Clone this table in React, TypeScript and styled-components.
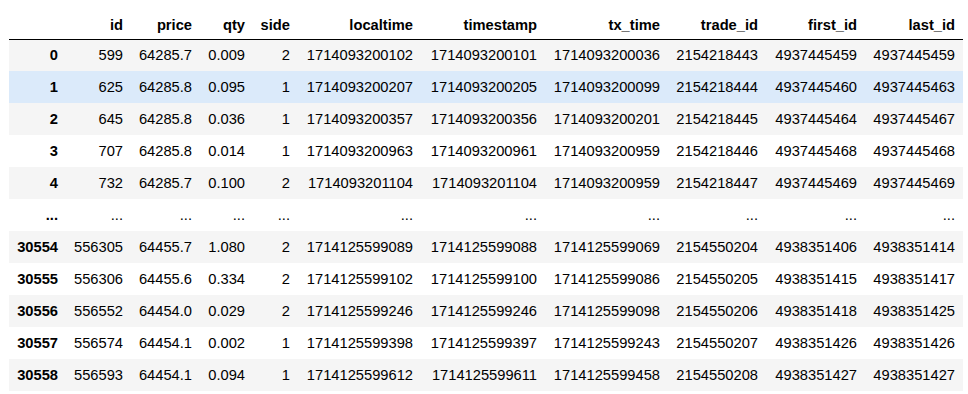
import styled, { createGlobalStyle } from "styled-components";

const GlobalStyle = createGlobalStyle`
  html, body {
    margin: 0;
    padding: 0;
    background: #fff;
  }
`;

const Wrap = styled.div`
  padding: 0 0 0 9px;
  font-family: "Liberation Sans", Arial, sans-serif;
  font-size: 14.7px;
  color: #000;
`;

const Table = styled.table`
  border-collapse: collapse;
  border-spacing: 0;
  table-layout: fixed;
  width: 954px;
`;

const HeadRow = styled.tr`
  height: 39px;
  border-bottom: 1px solid #000;
`;

const HeadCell = styled.th`
  text-align: right;
  vertical-align: bottom;
  font-weight: bold;
  padding: 0 8px 5px 0;
  line-height: 17px;
  white-space: nowrap;
`;

const Row = styled.tr<{ $hover?: boolean }>`
  height: 32px;
  background: ${(p) => (p.$hover ? "#dbeafa" : "transparent")};
  &:nth-child(odd) {
    background: ${(p) => (p.$hover ? "#dbeafa" : "#f5f5f5")};
  }
`;

const IndexCell = styled.th`
  text-align: right;
  font-weight: bold;
  padding: 0 8px 0 0;
  line-height: 17px;
  white-space: nowrap;
`;

const Cell = styled.td`
  text-align: right;
  padding: 0 8px 0 0;
  line-height: 17px;
  white-space: nowrap;
`;

const columns = [
  "id",
  "price",
  "qty",
  "side",
  "localtime",
  "timestamp",
  "tx_time",
  "trade_id",
  "first_id",
  "last_id",
];

const widths = [57, 65, 69, 53, 45, 123, 124, 123, 98, 99, 98];

const rows: string[][] = [
  ["0", "599", "64285.7", "0.009", "2", "1714093200102", "1714093200101", "1714093200036", "2154218443", "4937445459", "4937445459"],
  ["1", "625", "64285.8", "0.095", "1", "1714093200207", "1714093200205", "1714093200099", "2154218444", "4937445460", "4937445463"],
  ["2", "645", "64285.8", "0.036", "1", "1714093200357", "1714093200356", "1714093200201", "2154218445", "4937445464", "4937445467"],
  ["3", "707", "64285.8", "0.014", "1", "1714093200963", "1714093200961", "1714093200959", "2154218446", "4937445468", "4937445468"],
  ["4", "732", "64285.7", "0.100", "2", "1714093201104", "1714093201104", "1714093200959", "2154218447", "4937445469", "4937445469"],
  ["...", "...", "...", "...", "...", "...", "...", "...", "...", "...", "..."],
  ["30554", "556305", "64455.7", "1.080", "2", "1714125599089", "1714125599088", "1714125599069", "2154550204", "4938351406", "4938351414"],
  ["30555", "556306", "64455.6", "0.334", "2", "1714125599102", "1714125599100", "1714125599086", "2154550205", "4938351415", "4938351417"],
  ["30556", "556552", "64454.0", "0.029", "2", "1714125599246", "1714125599246", "1714125599098", "2154550206", "4938351418", "4938351425"],
  ["30557", "556574", "64454.1", "0.002", "1", "1714125599398", "1714125599397", "1714125599243", "2154550207", "4938351426", "4938351426"],
  ["30558", "556593", "64454.1", "0.094", "1", "1714125599612", "1714125599611", "1714125599458", "2154550208", "4938351427", "4938351427"],
];

export default function App() {
  return (
    <>
      <GlobalStyle />
      <Wrap>
        <Table>
          <colgroup>
            {widths.map((w, i) => (
              <col key={i} style={{ width: w }} />
            ))}
          </colgroup>
          <thead>
            <HeadRow>
              <HeadCell />
              {columns.map((c) => (
                <HeadCell key={c}>{c}</HeadCell>
              ))}
            </HeadRow>
          </thead>
          <tbody>
            {rows.map((r, i) => (
              <Row key={i} $hover={i === 1}>
                <IndexCell>{r[0]}</IndexCell>
                {r.slice(1).map((v, j) => (
                  <Cell key={j}>{v}</Cell>
                ))}
              </Row>
            ))}
          </tbody>
        </Table>
      </Wrap>
    </>
  );
}
